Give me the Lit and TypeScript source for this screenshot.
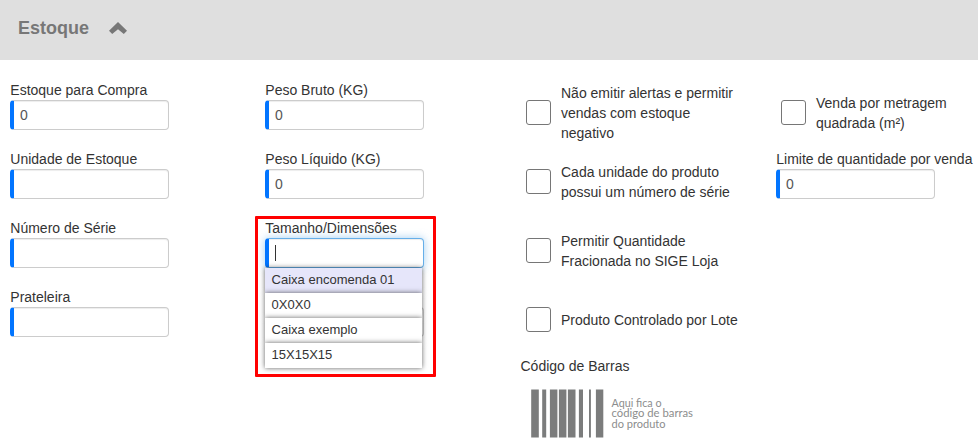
import { LitElement, html, css, svg, nothing } from "lit";
import { customElement, property } from "lit/decorators.js";

@customElement("stock-field")
class StockField extends LitElement {
  @property() label = "";
  @property() value = "";
  @property({ type: Array }) options: string[] = [];
  @property({ type: Boolean }) focused = false;

  static styles = css`
    :host { display: block; height: 50px; position: relative; width: 159px; }
    .label { height: 20px; line-height: 20px; white-space: nowrap; padding-left: 0.3px; }
    .input {
      box-sizing: border-box; width: 159px; height: 30px; border: 1px solid #ccc;
      border-left: 4px solid #0275ff; border-radius: 4px; padding: 0 6px; line-height: 29px;
      color: #555; background: #fff; box-shadow: inset 0 1px 1px rgba(0, 0, 0, 0.075);
    }
    .focus {
      border-color: #66afe9; border-left-color: #0275ff;
      box-shadow: inset 0 1px 1px rgba(0, 0, 0, 0.075), 0 0 8px rgba(102, 175, 233, 0.6);
    }
    .caret { display: block; width: 1px; height: 16px; margin-top: 6px; background: #333; }
    .frame {
      position: absolute; left: -10px; top: -2px; width: 181px; height: 161px;
      box-sizing: border-box; border: 3px solid #f00; border-radius: 1px; z-index: 3;
    }
    .menu { position: absolute; left: 0; top: 50px; width: 157px; z-index: 2; font-size: 13px; }
    .option {
      box-sizing: border-box; height: 25px; line-height: 23px; padding-left: 6.6px;
      background: #fff; color: #333; box-shadow: 0 0 5px rgba(0, 0, 0, 0.62);
    }
    .selected { background: #e6e6fa; }
  `;

  render() {
    return html`
      <div class="label">${this.label}</div>
      <div class="input ${this.focused ? "focus" : ""}">${this.focused ? html`<span class="caret"></span>` : this.value}</div>
      ${this.options.length
        ? html`<div class="menu">
              ${this.options.map((o, i) => html`<div class="option ${i === 0 ? "selected" : ""}">${o}</div>`)}
            </div>
            <div class="frame"></div>`
        : nothing}
    `;
  }
}

@customElement("stock-check")
class StockCheck extends LitElement {
  @property({ type: Array }) lines: string[] = [];

  static styles = css`
    :host { display: flex; align-items: center; height: 66px; gap: 10px; padding-left: 6px; }
    .box { box-sizing: border-box; width: 25px; height: 25px; border: 1px solid #767676; border-radius: 3px; flex: none; background: #fff; margin-top: -1px; }
    .text { line-height: 20px; white-space: nowrap; }
  `;

  render() {
    return html`<span class="box"></span>
      <div class="text">${this.lines.map((l) => html`<div>${l}</div>`)}</div>`;
  }
}

const BARS = [
  [0.2, 7.6], [11.2, 4], [18.9, 7.5], [27.9, 7.5], [36.9, 7.6], [47.9, 4.1], [58, 1.9], [64.9, 7.4],
];
const CAPTION: [string, number][] = [["Aqui fica o", 50], ["código de barras", 81.5], ["do produto", 54]];

@customElement("app-root")
class AppRoot extends LitElement {
  static styles = css`
    :host {
      display: block; height: 444px; overflow: hidden; background: #fff; color: #333;
      font: 14px/20px "Liberation Sans", Arial, sans-serif;
    }
    .header { display: flex; align-items: center; gap: 20px; height: 60px; padding: 0 18px; box-sizing: border-box; background: #dfdfdf; color: #777; }
    .title { font-size: 18px; font-weight: bold; line-height: 20px; margin-top: -4px; }
    .chevron { display: block; margin-top: -4px; }
    .body { display: grid; grid-template-columns: 255px 255px 255px 193px; padding: 20px 10px 0; }
    .col { display: flex; flex-direction: column; gap: 19px; }
    .checks { gap: 3px; }
    .last { gap: 3px; }
    .last stock-field { margin-left: 1px; }
    .barcode-label { line-height: 20px; padding-left: 0.5px; }
    .barcode { display: block; margin: 10px 0 0 11px; }
    .caption { font: 10.5px Lato, sans-serif; fill: #8c8d8d; }
  `;

  render() {
    return html`
      <div class="header">
        <div class="title">Estoque</div>
        <svg class="chevron" width="18" height="12" viewBox="0 0 18 12">
          <path fill="#777" d="M9 0 L18 8.8 L14.8 12 L9 7.2 L3.2 12 L0 8.8 Z" />
        </svg>
      </div>
      <div class="body">
        <div class="col">
          <stock-field label="Estoque para Compra" value="0"></stock-field>
          <stock-field label="Unidade de Estoque"></stock-field>
          <stock-field label="Número de Série"></stock-field>
          <stock-field label="Prateleira"></stock-field>
        </div>
        <div class="col">
          <stock-field label="Peso Bruto (KG)" value="0"></stock-field>
          <stock-field label="Peso Líquido (KG)" value="0"></stock-field>
          <stock-field
            label="Tamanho/Dimensões"
            focused
            .options=${["Caixa encomenda 01", "0X0X0", "Caixa exemplo", "15X15X15"]}
          ></stock-field>
          <stock-field></stock-field>
        </div>
        <div class="col checks">
          <stock-check .lines=${["Não emitir alertas e permitir", "vendas com estoque", "negativo"]}></stock-check>
          <stock-check .lines=${["Cada unidade do produto", "possui um número de série"]}></stock-check>
          <stock-check .lines=${["Permitir Quantidade", "Fracionada no SIGE Loja"]}></stock-check>
          <stock-check .lines=${["Produto Controlado por Lote"]}></stock-check>
          <div>
            <div class="barcode-label">Código de Barras</div>
            <svg class="barcode" width="166" height="52" viewBox="0 0 166 52">
              ${BARS.map(([x, w]) => svg`<rect x=${x} y="3.5" width=${w} height="48" fill="#7b7c7c" />`)}
              ${CAPTION.map(([t, w], i) => svg`<text class="caption" x="80.5" y=${20.5 + i * 10.5} textLength=${w} lengthAdjust="spacingAndGlyphs">${t}</text>`)}
            </svg>
          </div>
        </div>
        <div class="col last">
          <stock-check .lines=${["Venda por metragem", "quadrada (m²)"]}></stock-check>
          <stock-field label="Limite de quantidade por venda" value="0"></stock-field>
        </div>
      </div>
    `;
  }
}
